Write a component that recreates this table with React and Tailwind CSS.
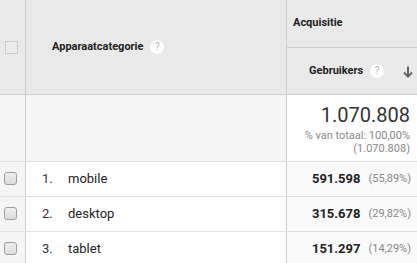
import React from 'react';

const rows = [
    { n: '1.', name: 'mobile', value: '591.598', pct: '(55,89%)' },
    { n: '2.', name: 'desktop', value: '315.678', pct: '(29,82%)' },
    { n: '3.', name: 'tablet', value: '151.297', pct: '(14,29%)' },
];

const Help = () => (
    <span className="ml-[7px] inline-flex h-[14px] w-[14px] items-center justify-center rounded-full bg-white text-[10px] font-normal leading-none text-[#b5b5b5]">
        ?
    </span>
);

const ArrowDown = () => (
    <svg width="10" height="12" viewBox="0 0 10 12" className="text-[#666]">
        <path d="M5 0.5 V10.5" stroke="currentColor" strokeWidth="2" fill="none" />
        <path d="M1 6.5 L5 10.5 L9 6.5" stroke="currentColor" strokeWidth="2" fill="none" />
    </svg>
);

const App = () => {
    return (
        <div
            className="h-[263px] w-[417px] overflow-hidden bg-white text-[#222]"
            style={{ fontFamily: 'Roboto, "Liberation Sans", Arial, sans-serif' }}
        >
            {/* header */}
            <div className="flex h-[95px] border-b border-[#cfcfcf] bg-[#e9e9e9]">
                <div className="flex w-[26px] shrink-0 items-center border-r border-[#cccccc] pl-[5px]">
                    <span className="h-[13px] w-[13px] border border-[#cacaca] bg-[#ececec]" />
                </div>
                <div className="flex w-[260px] items-center pl-[26px] text-[11px] font-bold">
                    Apparaatcategorie
                    <Help />
                </div>
                <div className="flex w-[131px] flex-col border-l border-[#cccccc]">
                    <div className="flex h-[48px] items-center border-b border-[#cccccc] pl-[6px] text-[11px] font-bold">
                        Acquisitie
                    </div>
                    <div className="flex flex-1 items-center pl-[22px] text-[11px] font-bold">
                        Gebruikers
                        <Help />
                        <span className="ml-auto mr-[4px] mt-[1px]">
                            <ArrowDown />
                        </span>
                    </div>
                </div>
            </div>

            {/* totals */}
            <div className="flex h-[67px] border-b border-[#e0e0e0]">
                <div className="w-[26px] shrink-0 border-r border-[#cccccc] bg-[#f5f5f5]" />
                <div className="w-[260px] bg-[#f5f5f5]" />
                <div className="flex w-[131px] flex-col items-end border-l border-[#cccccc] bg-white pr-[7px] pt-[8px]">
                    <span className="text-[20px] leading-[24px] text-[#333]">1.070.808</span>
                    <span className="mt-[2px] text-[11px] leading-[13px] text-[#888]">% van totaal: 100,00%</span>
                    <span className="text-[11px] leading-[13px] text-[#888]">(1.070.808)</span>
                </div>
            </div>

            {/* rows */}
            {rows.map((r) => (
                <div key={r.n} className="flex h-[35px] border-b border-[#e0e0e0]">
                    <div className="flex w-[26px] shrink-0 items-center border-r border-[#cccccc] bg-[#f5f5f5] pl-[4px]">
                        <span className="mb-[2px] h-[13px] w-[13px] rounded-[3px] border border-[#9e9e9e] bg-gradient-to-b from-[#f0f0f0] to-[#dcdcdc]" />
                    </div>
                    <div className="flex w-[260px] items-center pl-[16px] text-[13px]">
                        <span className="w-[26px] text-[#333]">{r.n}</span>
                        <span>{r.name}</span>
                    </div>
                    <div className="flex w-[131px] items-center justify-end border-l border-[#cccccc] bg-[#fafafa] pr-[6px]">
                        <span className="text-[13px] font-bold">{r.value}</span>
                        <span className="ml-[8px] text-[11px] text-[#888]">{r.pct}</span>
                    </div>
                </div>
            ))}
        </div>
    );
};

export default App;
